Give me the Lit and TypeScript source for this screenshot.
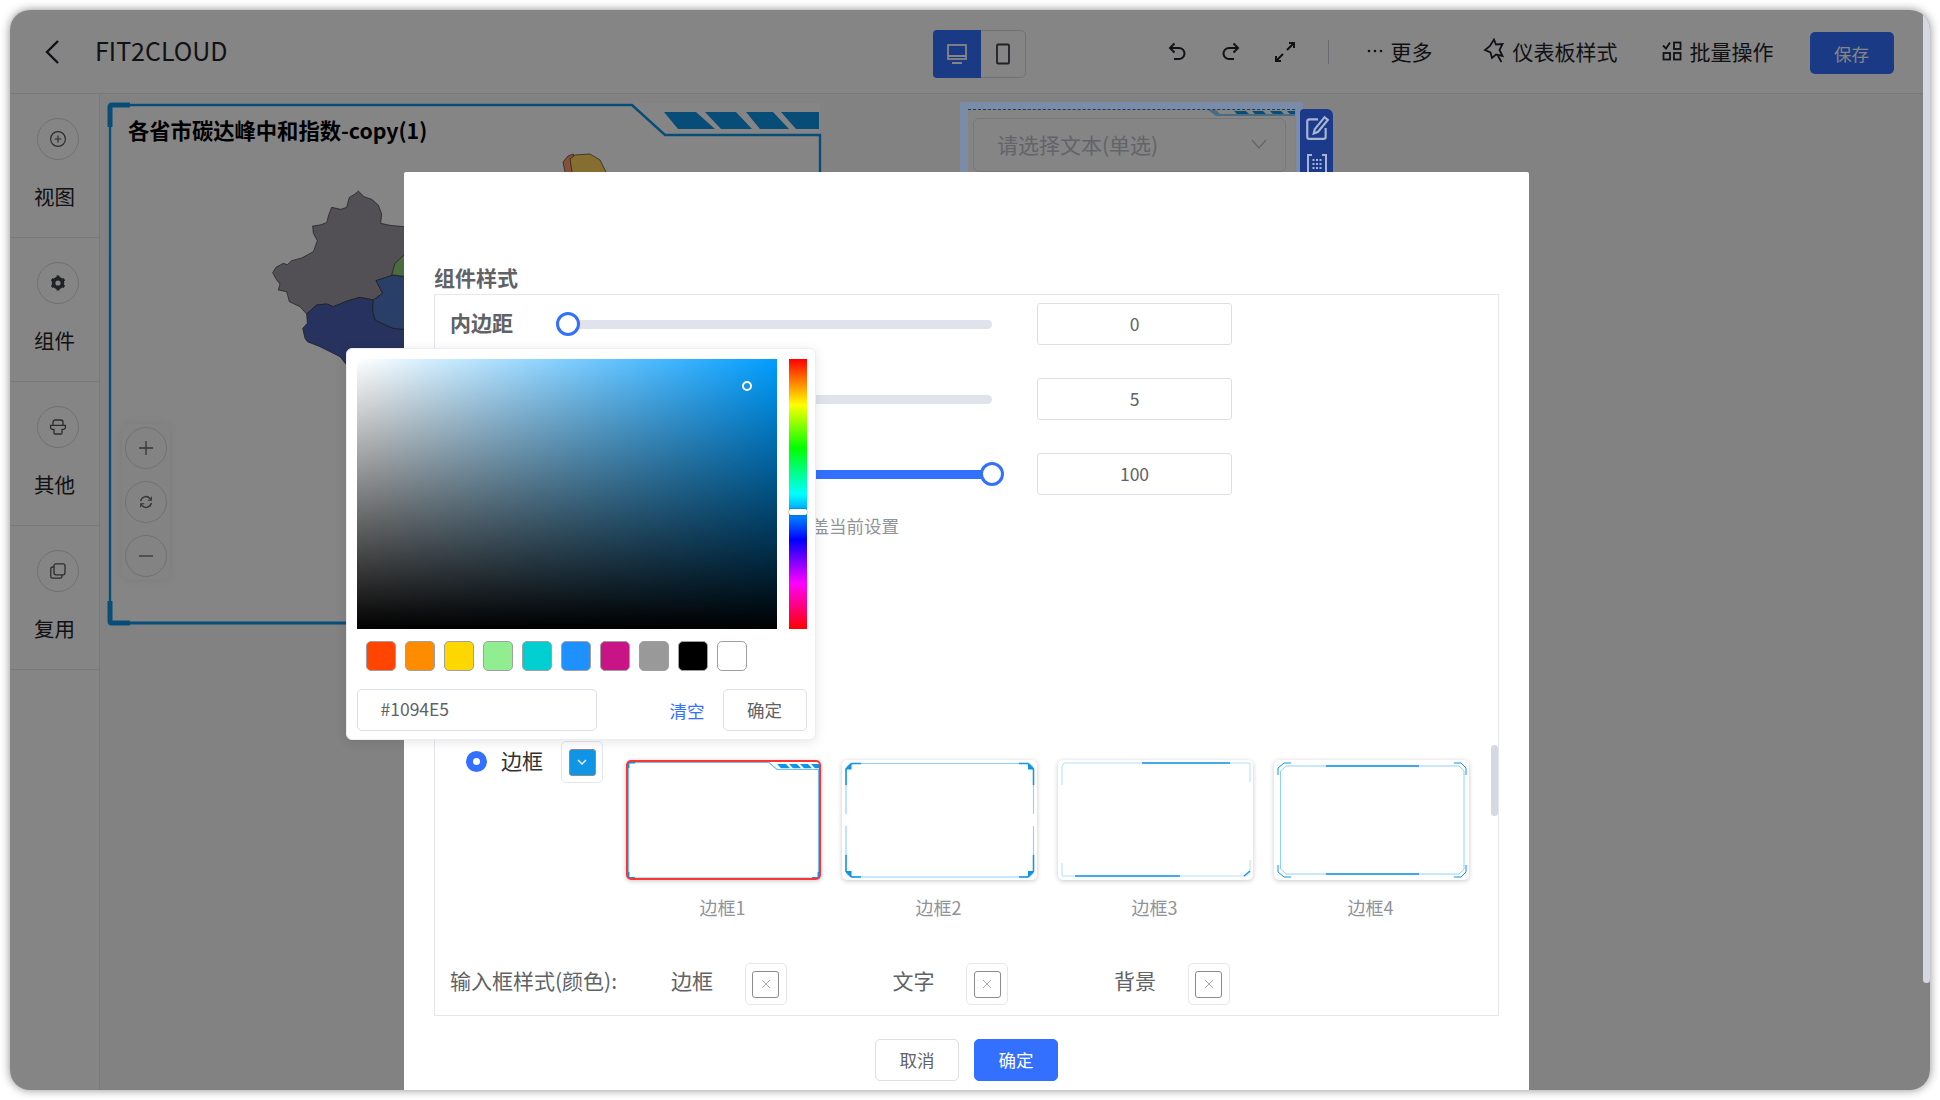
import { LitElement, html, css } from 'lit';
import { customElement } from 'lit/decorators.js';

const SWATCHES = ['#ff4500', '#ff8c00', '#ffd700', '#90ee90', '#00ced1', '#1e90ff', '#c71585', '#999999', '#000000', '#ffffff'];
const SLIDERS = [
  { label: '内边距', value: 0, pct: 0, fill: false },
  { label: '圆角', value: 5, pct: 5, fill: true },
  { label: '透明度', value: 100, pct: 100, fill: true },
];

const sideIcons = {
  view: html`<svg viewBox="0 0 18 18" width="18" height="18" fill="none" stroke="#555" stroke-width="1.2"><circle cx="9" cy="9" r="7.4"/><path d="M9 5.6v6.8M5.6 9h6.8"/></svg>`,
  comp: html`<svg viewBox="0 0 18 18" width="18" height="18" fill="none" stroke="#3c4046"><circle cx="9" cy="9" r="4.4" stroke-width="3.6"/><path d="M9 1.6v3M9 13.4v3M2.6 5.3l2.6 1.5M12.8 11.2l2.6 1.5M2.6 12.7l2.6-1.5M12.8 6.8l2.6-1.5" stroke-width="3"/></svg>`,
  other: html`<svg viewBox="0 0 18 18" width="18" height="18" fill="none" stroke="#555" stroke-width="1.3"><path d="M4 7V4.2C4 3 5 2 6.2 2h5.6C13 2 14 3 14 4.2V7M1.6 7.4h14.8v2.2c0 1-.8 1.8-1.8 1.8H13V15c0 .6-.4 1-1 1H6c-.6 0-1-.4-1-1v-3.6H3.4c-1 0-1.8-.8-1.8-1.8z"/></svg>`,
  reuse: html`<svg viewBox="0 0 18 18" width="18" height="18" fill="none" stroke="#555" stroke-width="1.3"><rect x="5" y="1.8" width="11" height="11" rx="2"/><path d="M5 5H3.6C2.6 5 1.8 5.8 1.8 6.8v7.6c0 1 .8 1.8 1.8 1.8h7.6c1 0 1.8-.8 1.8-1.8V13"/></svg>`,
};

const frames = [
  html`<svg viewBox="0 0 195 120" fill="none">
    <path d="M2.500 2.500H143L151 9.500H192.500V116Q192.500 118 190 118H5Q2.500 118 2.500 116V2.500" stroke="#6cc0f5" stroke-width="1.2"/>
    <path d="M2.500 8V4Q2.500 2.500 4 2.500H9M2.500 112V116.500Q2.500 118 4 118H9M186 118H191Q192.500 118 192.500 116.500V112" stroke="#1094e5" stroke-width="1.8"/>
    <path d="M151 4H160L164 8.300H155ZM163 4H171L175 8.300H167ZM174 4H182L186 8.300H178ZM185 4H193V8.300H189Z" fill="#1094e5"/>
  </svg>`,
  html`<svg viewBox="0 0 195 120" fill="none">
    <path d="M4 54V11Q4 3.500 12 3.500H184Q191.500 3.500 191.500 11V54M4 66V109Q4 117 12 117H184Q191.500 117 191.500 109V66" stroke="#8fd0fa" stroke-width="1.100"/>
    <path d="M4 25V9L9.500 3.500H19M177 3.500H186L191.500 9V25M4 95V111.500L9.500 117H19M177 117H186L191.500 111.500V95" stroke="#1094e5" stroke-width="1.500"/>
    <path d="M3.500 9.500L9.500 3.500V9.500ZM192 9.500L186 3.500V9.500ZM3.500 111L9.500 117V111ZM192 111L186 117V111Z" fill="#1094e5"/>
  </svg>`,
  html`<svg viewBox="0 0 195 120" fill="none">
    <path d="M4 25V6L6 3H192V22M192 100V113L188 116H4V103" stroke="#b5dffa" stroke-width="1"/>
    <path d="M84 3H172" stroke="#1094e5" stroke-width="1.6"/><path d="M17 116H122" stroke="#1094e5" stroke-width="1.4"/>
    <path d="M186 116L192 111" stroke="#1094e5" stroke-width="1.4"/>
  </svg>`,
  html`<svg viewBox="0 0 195 120" fill="none">
    <path d="M6.500 11L12 6H185L190 11V109L185 114H12L6.500 109Z" stroke="#8fd0fa" stroke-width="1"/>
    <path d="M4 15V8L10 3H17M180 3H187L192 8V15M4 105V112L10 117H17M180 117H187L192 112V105" stroke="#1094e5" stroke-width="1"/>
    <path d="M52 6H145M52 114H145" stroke="#1094e5" stroke-width="1.6"/>
  </svg>`,
];

@customElement('app-root')
export class AppRoot extends LitElement {
  static styles = css`
    :host {
      display: block;
      width: 1940px;
      height: 1100px;
      box-sizing: border-box;
      padding: 10px;
      background: #fff;
      font-family: 'Noto Sans CJK SC', 'Liberation Sans', sans-serif;
      color: #606266;
      overflow: hidden;
    }
    .window {
      position: relative;
      width: 100%;
      height: 100%;
      border-radius: 20px;
      overflow: hidden;
      background: #fff;
      box-shadow: 0 0 10px rgba(0, 0, 0, 0.45);
      display: flex;
      flex-direction: column;
    }
    .head {
      flex: none;
      height: 83px;
      border-bottom: 1px solid #e4e7ed;
      display: flex;
      align-items: center;
      color: #1f2329;
      font-size: 21px;
    }
    .back { margin-left: 34px; display: flex; }
    .name { margin-left: 35px; font-size: 25px; padding-bottom: 4px; }
    .toggle {
      margin-left: 705px;
      margin-top: 5px;
      width: 93px;
      height: 48px;
      box-sizing: border-box;
      border: 1px solid #d5d8de;
      border-radius: 5px;
      display: flex;
    }
    .toggle span { flex: 1; display: flex; align-items: center; justify-content: center; }
    .toggle .on { background: #3370ff; border-radius: 4px 0 0 4px; margin: -1px 0 -1px -1px; flex: none; width: 48px; }
    .tools { display: flex; align-items: center; margin-left: 139px; }
    .tools svg { display: block; }
    .tool-sep { width: 1px; height: 24px; background: #c9ccd2; margin: 0 38px 0 31px; }
    .act { display: flex; align-items: center; gap: 8px; white-space: nowrap; padding-bottom: 2px; }
    .save {
      margin-left: 36px;
      margin-top: 3px;
      width: 84px;
      height: 42px;
      border-radius: 5px;
      background: #3370ff;
      color: #fff;
      font-size: 17.5px;
      display: flex;
      align-items: center;
      justify-content: center;
    }
    .body { flex: 1; display: flex; min-height: 0; }
    .side { flex: none; width: 89px; border-right: 1px solid #e4e7ed; }
    .side-item {
      border-bottom: 1px solid #e4e7ed;
      display: flex;
      flex-direction: column;
      align-items: center;
      padding-top: 24px;
      height: 119px;
      color: #1f2329;
      font-size: 20.5px;
    }
    .round {
      width: 42px;
      height: 42px;
      box-sizing: border-box;
      border-radius: 50%;
      border: 1px solid #d5d8de;
      display: flex;
      align-items: center;
      justify-content: center;
      flex: none;
    }
    .side-item .round { margin-left: 7px; }
    .side-item .txt { margin-top: 21.5px; line-height: 28px; }
    .canvas { flex: 1; position: relative; background: #f9fafc; }
    .map-card {
      position: absolute;
      left: 8px;
      top: 9px;
      width: 712px;
      height: 521px;
      background: #fff;
    }
    .map-frame, .map-shape { position: absolute; left: 0; top: 0; overflow: visible; }
    .map-shape { left: -8px; top: -13px; }
    .map-title {
      position: relative;
      padding: 12px 20px 0;
      line-height: 30px;
      font-size: 21.3px;
      font-weight: 700;
      color: #000;
    }
    .zoom-box {
      position: absolute;
      left: 22px;
      top: 330px;
      width: 48px;
      padding: 3px 0;
      border-radius: 7px;
      background: #fbfbfc;
      box-shadow: 0 0 8px rgba(0, 0, 0, 0.08);
      display: flex;
      flex-direction: column;
      align-items: center;
      gap: 12px;
    }
    .widget {
      position: absolute;
      left: 868px;
      top: 15px;
      width: 327px;
      height: 100px;
      box-sizing: border-box;
      padding: 8px 9px 0 5px;
      background: #fff;
      border-top: 1px dashed #1c7fc4;
    }
    .widget-stripes { position: absolute; right: 0; top: 0; }
    .selectbox {
      height: 54px;
      box-sizing: border-box;
      border: 1px solid #e0e2e6;
      border-radius: 6px;
      display: flex;
      align-items: center;
      justify-content: space-between;
      padding: 0 18px 2px 23px;
      font-size: 21px;
      color: #bcc0c8;
    }
    .veil { position: absolute; inset: 0; background: rgba(0, 0, 0, 0.48); }
    .sel-ring {
      position: absolute;
      left: 950px;
      top: 92px;
      width: 343px;
      height: 100px;
      box-sizing: border-box;
      border: solid rgba(110, 164, 255, 0.3);
      border-width: 7px 7px 0 8px;
    }
    .strip {
      position: absolute;
      left: 1290px;
      top: 99px;
      width: 33px;
      height: 100px;
      background: #1c3a8b;
      border-radius: 4px 6px 0 0;
      display: flex;
      flex-direction: column;
      align-items: center;
      gap: 12px;
      padding-top: 6px;
    }
    .page-bar {
      position: absolute;
      right: 0;
      top: 0;
      width: 7px;
      height: 973px;
      border-radius: 0 0 4px 4px;
      background: #d5d8e2;
    }
    .dialog {
      position: absolute;
      left: 394px;
      top: 162px;
      bottom: 0;
      width: 1125px;
      box-sizing: border-box;
      padding: 92px 30px 0;
      background: #fff;
      border-radius: 2px 2px 0 0;
    }
    .sec-title { line-height: 26px; margin-bottom: 4px; font-size: 21px; font-weight: 700; color: #606266; }
    .panel {
      position: relative;
      height: 722px;
      box-sizing: border-box;
      border: 1px solid #e4e7ed;
      padding: 8px 0 0 15px;
    }
    .panel-bar { position: absolute; right: 0; top: 450px; width: 7px; height: 71px; border-radius: 4px; background: #d5d8e2; }
    .row { display: flex; align-items: center; height: 42px; margin-bottom: 33px; }
    .row-label { width: 118px; font-size: 21px; font-weight: 700; padding-bottom: 3.5px; }
    .track { position: relative; width: 424px; height: 9px; border-radius: 5px; background: #e0e3ec; margin-right: 45px; }
    .track-fill { position: absolute; left: 0; top: 0; bottom: 0; background: #3370ff; border-radius: 5px; }
    .thumb {
      position: absolute;
      top: 50%;
      width: 24px;
      height: 24px;
      box-sizing: border-box;
      margin: -12px 0 0 -12px;
      border-radius: 50%;
      border: 3px solid #3370ff;
      background: #fff;
    }
    .num {
      width: 195px;
      height: 42px;
      box-sizing: border-box;
      border: 1px solid #dcdfe6;
      border-radius: 3px;
      display: flex;
      align-items: center;
      justify-content: center;
      padding-bottom: 2px;
      font-size: 17.5px;
    }
    .note { margin: -14px 0 0 344px; height: 24px; line-height: 24px; font-size: 17.5px; color: #909399; white-space: nowrap; }
    .border-row { display: flex; align-items: flex-start; margin-top: 203px; }
    .radio {
      width: 21px;
      height: 21px;
      box-sizing: border-box;
      border-radius: 50%;
      border: 7px solid #3370ff;
      background: #fff;
      margin: 10px 14px 0 16px;
      flex: none;
    }
    .radio-label { font-size: 21px; line-height: 38px; color: #303133; width: 60px; flex: none; }
    .pick-box {
      flex: none;
      width: 42px;
      height: 42px;
      box-sizing: border-box;
      border: 1px solid #e4e7ed;
      border-radius: 5px;
      display: flex;
      align-items: center;
      justify-content: center;
    }
    .pick-in {
      width: 27px;
      height: 27px;
      box-sizing: border-box;
      border: 1px solid #8c8c8c;
      border-radius: 3px;
      display: flex;
      align-items: center;
      justify-content: center;
    }
    .pick-in.blue { background: #1094e5; }
    .cards { display: flex; gap: 21px; margin: 19px 0 0 23px; }
    .card { width: 195px; text-align: center; }
    .card-box {
      height: 120px;
      box-sizing: border-box;
      border-radius: 5px;
      background: #fff;
      box-shadow: 0 1px 5px rgba(0, 0, 0, 0.22);
    }
    .card-box.sel { outline: 2px solid #f33; outline-offset: -2px; }
    .card-box svg { display: block; width: 195px; height: 120px; }
    .card-name { margin: 17px 2px 1px 0; line-height: 20px; font-size: 18px; color: #909399; }
    .input-row { display: flex; align-items: center; height: 42px; margin-top: 45px; font-size: 21px; }
    .input-title { width: 221px; flex: none; white-space: nowrap; padding-bottom: 8px; }
    .input-group { width: 221.5px; flex: none; display: flex; align-items: center; }
    .input-group span { width: 73.5px; flex: none; padding-bottom: 8px; }
    .foot { display: flex; justify-content: center; gap: 15px; margin-top: 23px; }
    .btn {
      width: 84px;
      height: 42px;
      box-sizing: border-box;
      border: 1px solid #dcdfe6;
      border-radius: 5px;
      background: #fff;
      display: flex;
      align-items: center;
      justify-content: center;
      padding-bottom: 1px;
      font-size: 17.5px;
    }
    .btn.primary { background: #3370ff; border-color: #3370ff; color: #fff; }
    .picker {
      position: absolute;
      left: 335.5px;
      top: 338px;
      width: 470px;
      height: 392px;
      box-sizing: border-box;
      padding: 10px 8px 10px 10px;
      border: 1px solid #ebeef5;
      border-radius: 6px;
      background: #fff;
      box-shadow: 0 2px 12px rgba(0, 0, 0, 0.1);
    }
    .pick-top { display: flex; gap: 12px; }
    .sv {
      position: relative;
      width: 420px;
      height: 270px;
      background: linear-gradient(to top, #000, transparent), linear-gradient(to right, #fff, transparent), hsl(203, 100%, 50%);
    }
    .sv-dot {
      position: absolute;
      left: 390px;
      top: 27px;
      width: 10px;
      height: 10px;
      box-sizing: border-box;
      margin: -5px 0 0 -5px;
      border-radius: 50%;
      border: 2px solid #fff;
    }
    .hue {
      position: relative;
      width: 18px;
      height: 270px;
      background: linear-gradient(to bottom, #f00 0%, #ff0 17%, #0f0 33%, #0ff 50%, #00f 67%, #f0f 83%, #f00 100%);
    }
    .hue-thumb { position: absolute; left: 0; right: 0; top: 150px; height: 6px; border-radius: 2px; background: #fff; box-shadow: 0 0 2px rgba(0, 0, 0, 0.5); }
    .swatches { display: flex; gap: 9px; margin: 12px 0 0 9px; }
    .swatch { width: 30px; height: 30px; box-sizing: border-box; border: 1px solid #a0a0a0; border-radius: 5px; }
    .pick-foot { display: flex; align-items: center; margin-top: 18px; }
    .hex {
      width: 240px;
      height: 42px;
      box-sizing: border-box;
      border: 1px solid #dcdfe6;
      border-radius: 5px;
      padding-left: 23px;
      line-height: 38px;
      font-size: 17.5px;
    }
    .clear { margin-left: auto; margin-right: 18px; font-size: 17.5px; color: #3370ff; }
  `;

  private renderSlider(s: { label: string; value: number; pct: number; fill: boolean }) {
    return html`<div class="row">
      <div class="row-label">${s.label}</div>
      <div class="track">
        ${s.fill ? html`<div class="track-fill" style="width:${s.pct}%"></div>` : ''}
        <div class="thumb" style="left:${s.pct}%"></div>
      </div>
      <div class="num">${s.value}</div>
    </div>`;
  }

  private xBox() {
    return html`<div class="pick-box"><div class="pick-in">
      <svg viewBox="0 0 12 12" width="12" height="12" fill="none" stroke="#a8abb2" stroke-width="1"><path d="M2 2l8 8M10 2l-8 8"/></svg>
    </div></div>`;
  }

  render() {
    const undo = html`<svg viewBox="0 0 24 24" width="24" height="24" fill="none" stroke="#1f2329" stroke-width="2"><path d="M9.500 3.500L5 8l4.500 4.500M5 8h9a5.500 5.500 0 0 1 0 11H9"/></svg>`;
    const redo = html`<svg viewBox="0 0 24 24" width="24" height="24" fill="none" stroke="#1f2329" stroke-width="2"><path d="M14.500 3.500L19 8l-4.500 4.500M19 8h-9a5.500 5.500 0 0 0 0 11h5"/></svg>`;
    return html`<div class="window">
      <div class="head">
        <div class="back"><svg viewBox="0 0 16 26" width="16" height="26" fill="none" stroke="#1f2329" stroke-width="2.400"><path d="M14 2L3 13l11 11"/></svg></div>
        <div class="name">FIT2CLOUD</div>
        <div class="toggle">
          <span class="on"><svg viewBox="0 0 24 24" width="24" height="24" fill="none" stroke="#fff" stroke-width="1.800"><rect x="3" y="3" width="18" height="14"/><path d="M3 14h18M7 21h10" /></svg></span>
          <span><svg viewBox="0 0 24 24" width="24" height="24" fill="none" stroke="#3c4046" stroke-width="1.800"><rect x="6" y="2.500" width="12" height="19" rx="1"/><path d="M12 6v.1M12 17.500v.1" stroke-width="2.400"/></svg></span>
        </div>
        <div class="tools">
          ${undo}
          <span style="width:30px"></span>
          ${redo}
          <span style="width:30px"></span>
          <svg viewBox="0 0 24 24" width="24" height="24" fill="none" stroke="#1f2329" stroke-width="2"><path d="M14 10l7-7M16 3h5v5M10 14l-7 7M3 16v5h5"/></svg>
          <div class="tool-sep"></div>
          <div class="act"><svg viewBox="0 0 16 4" width="16" height="4" fill="#1f2329"><circle cx="2" cy="2" r="1.300"/><circle cx="8" cy="2" r="1.300"/><circle cx="14" cy="2" r="1.300"/></svg>更多</div>
          <div class="act" style="margin-left:50px"><svg viewBox="0 0 22 26" width="22" height="26" fill="none" stroke="#1f2329" stroke-width="1.800"><path d="M11 1.500l2 5 6.500-.5-3 6 3 6-6.500-1.500-4 3.500-1.500-5.500L2 12l5-4z"/><path d="M15 18l3.500 6"/></svg>仪表板样式</div>
          <div class="act" style="margin-left:44px"><svg viewBox="0 0 20 20" width="20" height="20" fill="none" stroke="#1f2329" stroke-width="1.800"><path d="M1 4.500l3 3 4-6"/><rect x="12" y="1.500" width="6.500" height="6.500"/><rect x="1.500" y="12" width="6.500" height="6.500"/><rect x="12" y="12" width="6.500" height="6.500"/></svg>批量操作</div>
          <div class="save">保存</div>
        </div>
      </div>
      <div class="body">
        <div class="side">
          <div class="side-item"><div class="round">${sideIcons.view}</div><div class="txt">视图</div></div>
          <div class="side-item"><div class="round">${sideIcons.comp}</div><div class="txt">组件</div></div>
          <div class="side-item"><div class="round">${sideIcons.other}</div><div class="txt">其他</div></div>
          <div class="side-item"><div class="round">${sideIcons.reuse}</div><div class="txt">复用</div></div>
        </div>
        <div class="canvas">
          <div class="map-card">
            <svg class="map-shape" viewBox="0 0 960 900" width="320" height="300" stroke="#2f2f35" stroke-width="2">
              <path fill="#9e97a3" d="M518 548L528 532L550 520L562 524L575 512L605 504L640 485L652 452L640 430L638 408L660 405L680 398L686 375L695 352L722 358L740 352L748 322L765 312L775 303L792 320L815 328L835 345L845 372L842 400L870 406L912 410L960 480L912 520L880 555L828 572L848 610L820 630L780 622L745 632L700 650L680 642L650 645L620 672L600 650L568 635L560 605L535 600L540 582L530 570Z"/>
              <path fill="#4e61b4" d="M620 672L650 645L680 642L700 650L745 632L780 622L820 630L818 660L825 690L880 715L960 722L960 900L740 825L720 800L690 785L660 770L622 755L615 745L608 715L622 700Z"/>
              <path fill="#517ac6" d="M828 572L880 555L960 565L960 722L880 715L825 690L818 660L820 630L848 610Z"/>
              <path fill="#8fcf78" d="M875 555L885 520L912 495L960 480L960 565L880 555Z"/>
              <path fill="#ff9a6f" d="M1389 216L1404 198L1420 192L1440 300L1389 300L1395 246Z"/>
              <path fill="#ffd45a" d="M1410 207L1425 195L1470 192L1500 210L1518 246L1518 300L1425 300Z"/>
            </svg>
            <svg class="map-frame" viewBox="0 0 712 521" width="712" height="521" fill="none">
              <path d="M2 521V5Q2 2 5 2H524L557 32H712V521" stroke="#1094e5" stroke-width="2.400"/>
              <path d="M2 520H700" stroke="#1094e5" stroke-width="3"/>
              <path d="M2 24V4Q2 2 4 2H22M2 498V518Q2 520 4 520H22" stroke="#1094e5" stroke-width="5"/>
              <path d="M556 9H588L607 26H570ZM597 9H628L644 26H613ZM638 9H665L681 26H652ZM673 9H711V26H688Z" fill="#1094e5"/>
            </svg>
            <div class="map-title">各省市碳达峰中和指数-copy(1)</div>
          </div>
          <div class="zoom-box">
            <div class="round"><svg viewBox="0 0 18 18" width="18" height="18" fill="none" stroke="#606266" stroke-width="1.300"><path d="M9 2v14M2 9h14"/></svg></div>
            <div class="round"><svg viewBox="0 0 18 18" width="16" height="16" fill="none" stroke="#606266" stroke-width="1.500"><path d="M3 8a6 6 0 0 1 10.500-3l1 1.500M15 10a6 6 0 0 1-10.500 3l-1-1.500"/><path d="M15 3v4h-4M3 15v-4h4" stroke-width="1.200"/></svg></div>
            <div class="round"><svg viewBox="0 0 18 18" width="18" height="18" fill="none" stroke="#606266" stroke-width="1.300"><path d="M2 9h14"/></svg></div>
          </div>
          <div class="widget">
            <svg class="widget-stripes" viewBox="0 0 87 6" width="87" height="6" fill="#1094e5"><path d="M0 0L8 6H87V4H12L8 0Z" fill="#8fd0fa"/><path d="M26 1H38L41 4H29ZM44 1H55L58 4H47ZM62 1H73L76 4H65ZM79 1H87V4H82Z"/></svg>
            <div class="selectbox">请选择文本(单选)<svg viewBox="0 0 16 10" width="16" height="10" fill="none" stroke="#c0c4cc" stroke-width="1.400"><path d="M1 1l7 8 7-8"/></svg></div>
          </div>
        </div>
      </div>
      <div class="veil"></div>
      <div class="sel-ring"></div>
      <div class="strip">
        <svg viewBox="0 0 24 24" width="26" height="26" fill="none" stroke="#a9b5cf" stroke-width="2"><path d="M20 12v8a2 2 0 0 1-2 2H5a2 2 0 0 1-2-2V6a2 2 0 0 1 2-2h8"/><path d="M10 13L19 2l3 2.500-9 11-4 1.500z"/></svg>
        <svg viewBox="0 0 24 24" width="24" height="24" fill="none" stroke="#a9b5cf" stroke-width="2"><path d="M7 2H3v21h18V2h-4"/><path d="M7.500 7h2M11 7h2M14.500 7h2M7.500 11h2M11 11h2M14.500 11h2M7.500 15h2M11 15h2M14.500 15h2"/></svg>
      </div>
      <div class="page-bar"></div>
      <div class="dialog">
        <div class="sec-title">组件样式</div>
        <div class="panel">
          <div class="panel-bar"></div>
          ${SLIDERS.map((s) => this.renderSlider(s))}
          <div class="note">覆盖当前设置</div>
          <div class="border-row">
            <div class="radio"></div>
            <div class="radio-label">边框</div>
            <div class="pick-box"><div class="pick-in blue"><svg viewBox="0 0 12 12" width="12" height="12" fill="none" stroke="#fff" stroke-width="1.300"><path d="M2 4l4 4 4-4"/></svg></div></div>
            <div class="cards">
              ${frames.map((f, i) => html`<div class="card">
                <div class="card-box ${i === 0 ? 'sel' : ''}">${f}</div>
                <div class="card-name">边框${i + 1}</div>
              </div>`)}
            </div>
          </div>
          <div class="input-row">
            <div class="input-title">输入框样式(颜色):</div>
            <div class="input-group"><span>边框</span>${this.xBox()}</div>
            <div class="input-group"><span>文字</span>${this.xBox()}</div>
            <div class="input-group"><span>背景</span>${this.xBox()}</div>
          </div>
        </div>
        <div class="foot">
          <div class="btn">取消</div>
          <div class="btn primary">确定</div>
        </div>
      </div>
      <div class="picker">
        <div class="pick-top">
          <div class="sv"><div class="sv-dot"></div></div>
          <div class="hue"><div class="hue-thumb"></div></div>
        </div>
        <div class="swatches">
          ${SWATCHES.map((c) => html`<div class="swatch" style="background:${c}"></div>`)}
        </div>
        <div class="pick-foot">
          <div class="hex">#1094E5</div>
          <div class="clear">清空</div>
          <div class="btn">确定</div>
        </div>
      </div>
    </div>`;
  }
}
